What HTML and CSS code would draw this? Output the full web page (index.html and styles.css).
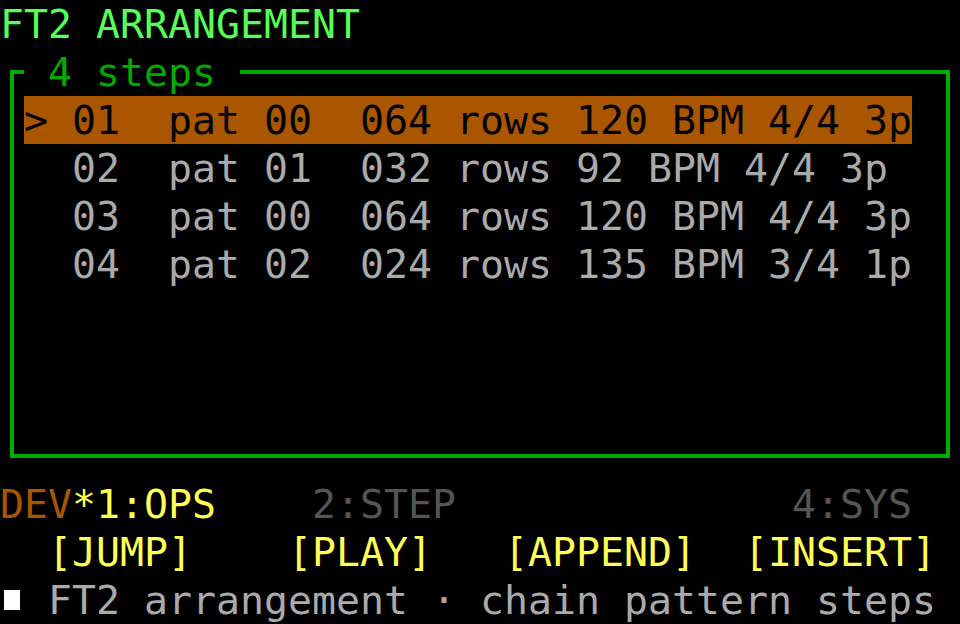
FILE: index.html
```html
<!DOCTYPE html>
<html>
<head>
<meta charset="utf-8">
<link rel="stylesheet" href="styles.css">
</head>
<body>
<div class="screen">
  <div class="line title">FT2 ARRANGEMENT</div>
  <div class="box">
    <div class="legend"> 4 steps </div>
    <div class="rows">
      <div class="line"><span class="sel">&gt; 01  pat 00  064 rows 120 BPM 4/4 3p</span></div>
      <div class="line row">  02  pat 01  032 rows 92 BPM 4/4 3p</div>
      <div class="line row">  03  pat 00  064 rows 120 BPM 4/4 3p</div>
      <div class="line row">  04  pat 02  024 rows 135 BPM 3/4 1p</div>
    </div>
  </div>
  <div class="line tabs"><span class="dev">DEV</span><span class="on">*1:OPS</span>    <span class="off">2:STEP</span>              <span class="off">4:SYS</span></div>
  <div class="line keys">  [JUMP]    [PLAY]   [APPEND]  [INSERT]</div>
  <div class="line status"><span class="sq"></span> FT2 arrangement · chain pattern steps</div>
</div>
</body>
</html>
```
FILE: styles.css
```css
html, body {
  margin: 0;
  padding: 0;
  background: #000;
}
.screen {
  width: 960px;
  height: 624px;
  overflow: hidden;
  font-family: "DejaVu Sans Mono", "Liberation Mono", monospace;
  font-size: 39.87px;
  color: #aaaaaa;
}
.line {
  height: 48px;
  line-height: 48px;
  white-space: pre;
}
.title {
  color: #55ff55;
}
.box {
  position: relative;
  box-sizing: border-box;
  margin: 22px 0 22px 10px;
  width: 940px;
  height: 388px;
  border: 4px solid #00aa00;
}
.legend {
  position: absolute;
  left: 10px;
  top: -26px;
  height: 48px;
  line-height: 48px;
  white-space: pre;
  background: #000;
  color: #00aa00;
}
.rows {
  padding: 22px 0 0 10px;
}
.sel {
  display: inline-block;
  height: 48px;
  background: #aa5500;
  color: #000;
}
.dev {
  color: #aa5500;
}
.on {
  color: #ffff55;
}
.off {
  color: #555555;
}
.keys {
  color: #ffff55;
}
.sq {
  display: inline-block;
  width: 16px;
  height: 20px;
  margin: 0 4px;
  background: #fff;
  vertical-align: 4px;
}
```
